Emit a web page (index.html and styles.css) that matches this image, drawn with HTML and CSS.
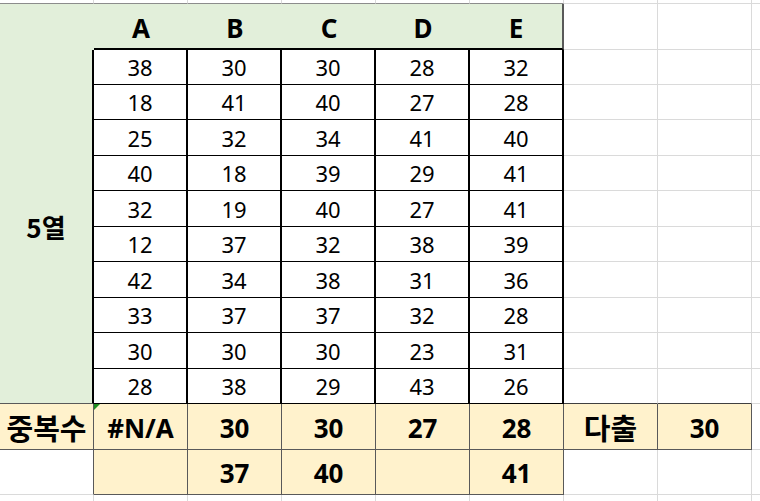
FILE: index.html
```html
<!DOCTYPE html>
<html lang="ko">
<head>
<meta charset="utf-8">
<title>5열 중복수</title>
<link rel="stylesheet" href="styles.css">
</head>
<body>
<div class="sheet">
  <div class="c t"></div><div class="c t"></div><div class="c t"></div><div class="c t"></div><div class="c t"></div><div class="c t"></div><div class="c"></div><div class="c"></div><div class="c e"></div>

  <div class="c h h0"></div><div class="c h">A</div><div class="c h">B</div><div class="c h">C</div><div class="c h">D</div><div class="c h h5">E</div><div class="c"></div><div class="c"></div><div class="c e"></div>

  <div class="c lbl"><span class="k">5열</span></div>

  <div class="c d">38</div><div class="c d">30</div><div class="c d">30</div><div class="c d">28</div><div class="c d">32</div><div class="c"></div><div class="c"></div><div class="c e"></div>
  <div class="c d">18</div><div class="c d">41</div><div class="c d">40</div><div class="c d">27</div><div class="c d">28</div><div class="c"></div><div class="c"></div><div class="c e"></div>
  <div class="c d">25</div><div class="c d">32</div><div class="c d">34</div><div class="c d">41</div><div class="c d">40</div><div class="c"></div><div class="c"></div><div class="c e"></div>
  <div class="c d">40</div><div class="c d">18</div><div class="c d">39</div><div class="c d">29</div><div class="c d">41</div><div class="c"></div><div class="c"></div><div class="c e"></div>
  <div class="c d">32</div><div class="c d">19</div><div class="c d">40</div><div class="c d">27</div><div class="c d">41</div><div class="c"></div><div class="c"></div><div class="c e"></div>
  <div class="c d">12</div><div class="c d">37</div><div class="c d">32</div><div class="c d">38</div><div class="c d">39</div><div class="c"></div><div class="c"></div><div class="c e"></div>
  <div class="c d">42</div><div class="c d">34</div><div class="c d">38</div><div class="c d">31</div><div class="c d">36</div><div class="c"></div><div class="c"></div><div class="c e"></div>
  <div class="c d">33</div><div class="c d">37</div><div class="c d">37</div><div class="c d">32</div><div class="c d">28</div><div class="c"></div><div class="c"></div><div class="c e"></div>
  <div class="c d">30</div><div class="c d">30</div><div class="c d">30</div><div class="c d">23</div><div class="c d">31</div><div class="c"></div><div class="c"></div><div class="c e"></div>
  <div class="c d">28</div><div class="c d">38</div><div class="c d">29</div><div class="c d">43</div><div class="c d">26</div><div class="c dk"></div><div class="c dk"></div><div class="c e"></div>

  <div class="c y"><span class="k kl">중복수</span></div><div class="c y na">#N/A</div><div class="c y">30</div><div class="c y">30</div><div class="c y">27</div><div class="c y">28</div><div class="c y"><span class="k kl">다출</span></div><div class="c y">30</div><div class="c e"></div>

  <div class="c dr"></div><div class="c y"></div><div class="c y">37</div><div class="c y">40</div><div class="c y"></div><div class="c y">41</div><div class="c"></div><div class="c"></div><div class="c e"></div>

  <div class="c nb"></div><div class="c nb"></div><div class="c nb"></div><div class="c nb"></div><div class="c nb"></div><div class="c nb"></div><div class="c nb"></div><div class="c nb"></div><div class="c e nb"></div>
</div>
</body>
</html>
```

FILE: styles.css
```css
html, body {
  margin: 0;
  padding: 0;
  background: #fff;
}
body {
  width: 760px;
  height: 501px;
  overflow: hidden;
  font-family: "Noto Sans", "Noto Sans CJK KR", sans-serif;
  color: #000;
}
.sheet {
  display: grid;
  grid-template-columns: 94px repeat(7, 94px) 8px;
  grid-template-rows: 4px 46px 35px 35px 36px 35px 36px 35px 36px 35px 36px 35px 46px 45px 6px;
}
.c {
  box-sizing: border-box;
  border-right: 1px solid #dadada;
  border-bottom: 1px solid #dadada;
  display: flex;
  align-items: center;
  justify-content: center;
  line-height: 1;
  position: relative;
}
.e { border-right: none; }
.nb { border-bottom: none; }
.t { border-bottom-color: #8c8c8c; }
.h {
  background: #e2efda;
  border-right: none;
  border-bottom: 2px solid #000;
  font-weight: 700;
  font-size: 26px;
  padding-top: 3px;
}
.h0 { border-bottom: none; }
.h5 { border-right: 2px solid #595959; }
.lbl {
  grid-column: 1;
  grid-row: 3 / span 10;
  background: #e2efda;
  border-right: 2px solid #000;
  border-bottom: 1px solid #595959;
  font-weight: 700;
}
.d {
  border-right: 2px solid #000;
  border-bottom: 1px solid #000;
  font-size: 22px;
}
.y {
  background: #fff2cc;
  border-right: 1px solid #595959;
  border-bottom: 1px solid #595959;
  font-weight: 700;
  font-size: 26px;
  padding-top: 2px;
}
.k {
  font-family: "Noto Sans CJK KR", sans-serif;
  font-weight: 700;
  font-size: 26px;
}
.kl { font-size: 29px; }
.dk { border-bottom-color: #404040; }
.dr { border-right-color: #595959; }
.na::before {
  content: "";
  position: absolute;
  left: 0;
  top: 0;
  border-top: 6px solid #1f8f1f;
  border-right: 6px solid transparent;
}
```
